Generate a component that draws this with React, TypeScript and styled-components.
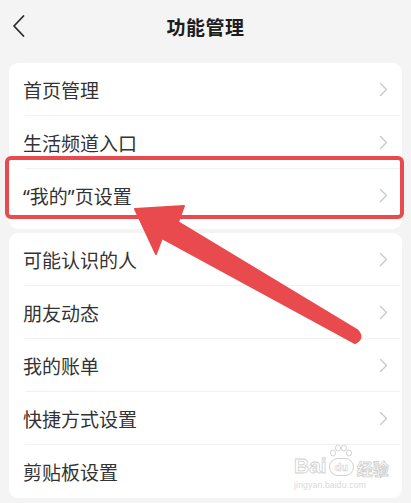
import React from 'react';
import styled, { createGlobalStyle } from 'styled-components';

const GlobalStyle = createGlobalStyle`
  html, body {
    margin: 0;
    padding: 0;
    background: #f4f4f4;
  }
  body {
    font-family: "Noto Sans", "Noto Sans CJK SC", sans-serif;
  }
`;

const Page = styled.div`
  position: relative;
  width: 411px;
  height: 503px;
  overflow: hidden;
  background: #f4f4f4;
`;

const Header = styled.header`
  height: 54px;
  display: flex;
  align-items: center;
  justify-content: center;
  position: relative;
`;

const BackButton = styled.div`
  position: absolute;
  left: 12px;
  top: 13px;
  width: 16px;
  height: 26px;
  display: flex;
  align-items: center;
`;

const Title = styled.h1`
  margin: 0;
  font-size: 19px;
  font-weight: 700;
  color: #1c1c1c;
  letter-spacing: 0.5px;
`;

const Content = styled.div`
  display: flex;
  flex-direction: column;
  gap: 4px;
  padding: 9px 9px 0;
`;

const Card = styled.div<{ $bottom?: number }>`
  background: #ffffff;
  border-radius: 9px;
  padding-bottom: ${p => p.$bottom ?? 0}px;
  display: flex;
  flex-direction: column;
`;

const Row = styled.div<{ $divider?: boolean }>`
  height: 53px;
  display: flex;
  align-items: center;
  justify-content: space-between;
  padding: 0 14px 0 14px;
  position: relative;

  &::after {
    content: '';
    display: ${p => (p.$divider ? 'block' : 'none')};
    position: absolute;
    left: 16px;
    right: 2px;
    bottom: 0;
    height: 1px;
    background: #f1f1f1;
  }
`;

const Label = styled.span`
  font-size: 19px;
  color: #333333;
`;

const Highlight = styled.div`
  position: absolute;
  left: 5px;
  top: 156px;
  width: 399px;
  height: 63px;
  box-sizing: border-box;
  border: 4px solid #e84a4d;
  border-radius: 6px;
  pointer-events: none;
`;

const Overlay = styled.svg`
  position: absolute;
  left: 0;
  top: 0;
  pointer-events: none;
`;

const Watermark = styled.div`
  position: absolute;
  left: 294px;
  top: 444px;
  display: flex;
  flex-direction: column;
  align-items: flex-start;
  pointer-events: none;
`;

const MarkTop = styled.div`
  display: flex;
  align-items: flex-end;
  gap: 1px;
  font-family: "Liberation Sans", Arial, sans-serif;
  font-size: 21px;
  font-weight: 700;
  color: #ffffff;
  -webkit-text-stroke: 0.8px #d0d0d0;
  line-height: 1;
`;

const PawBox = styled.span`
  display: inline-flex;
  flex-direction: column;
  align-items: center;
  position: relative;
  margin: 0 1px;
`;

const PawBadge = styled.span`
  display: inline-flex;
  align-items: center;
  justify-content: center;
  width: 23px;
  height: 16px;
  border-radius: 9px;
  border: 1px solid #d0d0d0;
  font-size: 11px;
  -webkit-text-stroke: 0.5px #d0d0d0;
`;

const MarkCn = styled.span`
  font-family: "Noto Sans CJK SC", sans-serif;
  font-size: 16px;
  margin-left: 1px;
`;

const MarkUrl = styled.div`
  font-family: "Liberation Sans", Arial, sans-serif;
  font-size: 8.5px;
  color: #d8d8d8;
  margin-top: 4px;
  letter-spacing: 0.2px;
`;

const Chevron = () => (
  <svg width="9" height="15" viewBox="0 0 9 15">
    <path d="M1.5 1.5 L7.5 7.5 L1.5 13.5" fill="none" stroke="#c9c9c9" strokeWidth="1.4" strokeLinecap="round" strokeLinejoin="round" />
  </svg>
);

const PawPrint = () => (
  <svg width="24" height="14" viewBox="0 0 24 14">
    <g fill="#ffffff" stroke="#d0d0d0" strokeWidth="0.9">
      <ellipse cx="4" cy="9" rx="2.6" ry="3" />
      <ellipse cx="9" cy="4" rx="2.6" ry="3" />
      <ellipse cx="15" cy="4" rx="2.6" ry="3" />
      <ellipse cx="20" cy="9" rx="2.6" ry="3" />
    </g>
  </svg>
);

const groups: string[][] = [
  ['首页管理', '生活频道入口', '“我的”页设置'],
  ['可能认识的人', '朋友动态', '我的账单', '快捷方式设置', '剪贴板设置'],
];

const App: React.FC = () => {
  return (
    <Page>
      <GlobalStyle />
      <Header>
        <BackButton>
          <svg width="14" height="24" viewBox="0 0 14 24">
            <path d="M11.5 2 L2 12 L11.5 22" fill="none" stroke="#2b2b2b" strokeWidth="1.8" strokeLinecap="round" strokeLinejoin="round" />
          </svg>
        </BackButton>
        <Title>功能管理</Title>
      </Header>
      <Content>
        {groups.map((items, gi) => (
          <Card key={gi} $bottom={gi === 0 ? 7 : 0}>
            {items.map((label, i) => (
              <Row key={label} $divider={i < items.length - 1}>
                <Label>{label}</Label>
                <Chevron />
              </Row>
            ))}
          </Card>
        ))}
      </Content>

      <Highlight />
      <Overlay width="411" height="503" viewBox="0 0 411 503">
        <path
          d="M135 209 L184 206 L178 222 L357 330 Q365 338 355 343 L162 238 L156 254 Z"
          fill="#e84a4d"
          stroke="#e84a4d"
          strokeWidth="2"
          strokeLinejoin="round"
        />
      </Overlay>

      <Watermark>
        <MarkTop>
          <span>Bai</span>
          <PawBox>
            <PawPrint />
            <PawBadge>du</PawBadge>
          </PawBox>
          <MarkCn>经验</MarkCn>
        </MarkTop>
        <MarkUrl>jingyan.baidu.com</MarkUrl>
      </Watermark>
    </Page>
  );
};

export default App;
